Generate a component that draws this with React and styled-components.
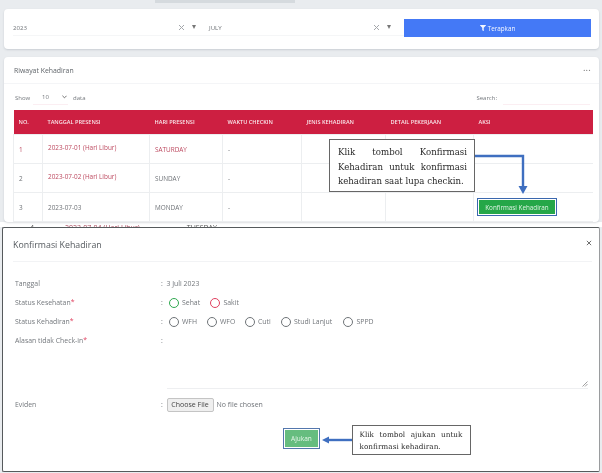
import React from 'react'
import styled, { createGlobalStyle } from 'styled-components'
import { FaFilter } from 'react-icons/fa'

const GlobalStyle = createGlobalStyle`
  html, body { margin: 0; padding: 0; background: #fff; }
  body { font-family: "Open Sans", "Liberation Sans", sans-serif; color: #6c7178; }
  * { box-sizing: border-box; }
`

const Page = styled.div`
  width: 602px;
  height: 473px;
  overflow: hidden;
  background: #e9ecef;
  display: flex;
  flex-direction: column;
  filter: blur(0.25px);
`
const TopStrip = styled.div`
  height: 3px;
  margin-left: 155px;
  width: 140px;
  background: #d5dade;
  flex: none;
`
const Card = styled.section`
  position: relative;
  margin: 0 3px 0 4px;
  background: #fff;
  border-radius: 4px;
  box-shadow: 0 1px 2px rgba(60, 70, 90, 0.18);
`
const FilterCard = styled(Card)`
  margin-top: 6px;
  height: 40px;
  padding: 10px 8px 0 9px;
  display: flex;
`
const Select = styled.div`
  width: ${p => p.$w}px;
  height: 17px;
  display: flex;
  align-items: center;
  font-size: 6.1px;
  color: #6f7378;
  border-bottom: 1px solid #f5f6f7;
  span:first-child { flex: 1; }
`
const Clear = styled.svg`
  width: 7px;
  height: 7px;
  margin-right: 7px;
  stroke: #a4a7ab;
  stroke-width: 1;
`
const Caret = styled.i`
  width: 0;
  height: 0;
  border-left: 2.5px solid transparent;
  border-right: 2.5px solid transparent;
  border-top: 4px solid #777;
  margin-right: ${p => p.$mr}px;
`
const ApplyButton = styled.button`
  width: 187px;
  height: 18px;
  border: none;
  padding: 0;
  background: #4479f6;
  color: #f2f6ff;
  font: 6.3px "Open Sans", sans-serif;
  display: flex;
  align-items: center;
  justify-content: center;
  gap: 2px;
`
const HistoryCard = styled(Card)`
  margin-top: 8px;
  height: 165px;
`
const CardHead = styled.div`
  height: 27px;
  padding: 0 8px 0 10px;
  border-bottom: 1px solid #f4f5f7;
  display: flex;
  align-items: center;
  justify-content: space-between;
  font-size: 6.9px;
  color: #5f6469;
`
const Dots = styled.span`
  font-size: 7px;
  font-weight: 700;
  letter-spacing: 0.6px;
  line-height: 1;
  margin-top: -3px;
  color: #777;
`
const Controls = styled.div`
  height: 26px;
  padding: 1px 9px 0 11px;
  display: flex;
  align-items: center;
  font-size: 6px;
  color: #74787d;
`
const Show = styled.span`
  width: 18px;
`
const PageSelect = styled.span`
  width: 35px;
  height: 15px;
  margin-right: 5px;
  padding-left: 9px;
  border-bottom: 1px solid #fbeef2;
  display: flex;
  align-items: center;
  justify-content: space-between;
`
const Chevron = styled.svg`
  width: 5px;
  height: 4px;
  margin-right: 1px;
  stroke: #666;
  fill: none;
  stroke-width: 1.1;
`
const SearchLabel = styled.span`
  margin-left: auto;
  margin-right: 6px;
`
const SearchInput = styled.span`
  width: 87px;
  height: 15px;
  border-bottom: 1px solid #fbeef2;
`
const Table = styled.table`
  width: 579px;
  margin-left: 9px;
  border-collapse: collapse;
  table-layout: fixed;
`
const HeadRow = styled.tr`
  height: 24px;
  background: #cd1f41;
`
const Th = styled.th`
  padding: 0 0 0 5px;
  font-size: 5.6px;
  font-weight: 600;
  text-align: left;
  color: #f8e4e8;
`
const Td = styled.td`
  height: 29px;
  padding: 1px 0 ${p => (p.$lift ? 4 : 0)}px 5px;
  font-size: 6.4px;
  color: ${p => (p.$red ? '#bd4a60' : '#6f7378')};
  border: 1px solid #eceef0;
  &:last-child { border-right: none; }
`
const SliverRow = styled.div`
  height: 5px;
  flex: none;
  overflow: hidden;
  display: flex;
  background: #fff;
  padding-left: 30px;
  font-size: 7px;
  line-height: 9px;
  color: #555;
  span { margin-top: 1px; white-space: nowrap; }
  span:nth-child(2) { margin-left: 31px; color: #a8465a; }
  span:nth-child(3) { margin-left: 47px; }
`
const Modal = styled.section`
  position: relative;
  flex: none;
  margin: 0 2px 0 2px;
  height: 244.5px;
  background: #fff;
  border: 1.5px solid #565a5c;
  border-bottom-width: 1px;
  border-right-color: #9a9c9e;
  border-radius: 2px;
`
const ModalHead = styled.div`
  height: 34px;
  margin: 0 7px 0 10px;
  border-bottom: 1px solid #f2f3f5;
  display: flex;
  align-items: center;
  justify-content: space-between;
  font-size: 8.8px;
  color: #555a5f;
`
const Close = styled.svg`
  width: 6px;
  height: 6px;
  margin: 0 0 3px;
  stroke: #666;
  stroke-width: 1.1;
`
const Form = styled.div`
  padding: 12px 0 0 12px;
`
const FieldRow = styled.div`
  height: ${p => p.$h || 19}px;
  display: grid;
  grid-template-columns: 146px 5.5px 1fr;
  align-items: ${p => (p.$top ? 'start' : 'center')};
  font-size: 6.9px;
  line-height: 19px;
  color: #73777c;
`
const Required = styled.b`
  color: #e0405f;
  font-weight: 400;
`
const Options = styled.div`
  display: flex;
  align-items: center;
  padding-left: 2px;
`
const Radio = styled.label`
  width: ${p => p.$w}px;
  display: flex;
  align-items: center;
  gap: 3.5px;
  &::before {
    content: "";
    width: 8px;
    height: 8px;
    border-radius: 50%;
    border: 1px solid ${p => p.$color || '#6f7478'};
  }
`
const TextArea = styled.div`
  position: relative;
  width: 421px;
  height: 58px;
  border-bottom: 1px solid #eeeff1;
`
const Grip = styled.svg`
  position: absolute;
  right: 0;
  bottom: 1px;
  width: 6px;
  height: 6px;
  stroke: #888;
  stroke-width: 0.8;
`
const FileRow = styled.div`
  display: flex;
  align-items: center;
  gap: 3px;
  font-size: 7px;
  color: #6f7378;
`
const FileButton = styled.span`
  width: 47px;
  height: 14px;
  background: #efefef;
  border: 1px solid #c4c4c4;
  border-radius: 2px;
  color: #444;
  font-size: 7px;
  line-height: 12px;
  text-align: center;
`
const Submit = styled.button`
  position: absolute;
  left: 280px;
  top: 200px;
  width: 37px;
  height: 21px;
  padding: 0;
  background: #66bd7f;
  border: 2px solid #fff;
  outline: 1px solid #5477ad;
  outline-offset: -1px;
  color: #e6f6ea;
  font: 6.5px "Open Sans", sans-serif;
`
const Callout = styled.div`
  position: absolute;
  left: ${p => p.$x}px;
  top: ${p => p.$y}px;
  width: ${p => p.$w}px;
  height: ${p => p.$h}px;
  padding: ${p => p.$pad};
  background: #fff;
  border: 1px solid #666;
  font-family: "DejaVu Serif", serif;
  font-size: ${p => p.$size}px;
  line-height: ${p => p.$lh}px;
  color: #2a2a2a;
  text-align: justify;
`
const Arrow = styled.svg`
  position: absolute;
  left: ${p => p.$x}px;
  top: ${p => p.$y}px;
  fill: none;
  overflow: visible;
`
const ConfirmButton = styled.button`
  position: absolute;
  left: 473px;
  top: 141px;
  width: 80px;
  height: 18px;
  padding: 0;
  background: #25a748;
  border: 2px solid #fff;
  outline: 1px solid #3b68ae;
  outline-offset: -1px;
  color: #dff3e4;
  font: 6.3px "Open Sans", sans-serif;
`

const columns = [
  ['NO.', 29], ['TANGGAL PRESENSI', 107], ['HARI PRESENSI', 73], ['WAKTU CHECKIN', 79],
  ['JENIS KEHADIRAN', 84], ['DETAIL PEKERJAAN', 88], ['AKSI', 119],
]
const rows = [
  { no: 1, date: '2023-07-01 (Hari Libur)', day: 'SATURDAY', off: true, allRed: true },
  { no: 2, date: '2023-07-02 (Hari Libur)', day: 'SUNDAY', off: true },
  { no: 3, date: '2023-07-03', day: 'MONDAY' },
]

const X = () => <path d="M1 1 L6 6 M6 1 L1 6" />

const App = () => (
  <Page>
    <GlobalStyle />
    <TopStrip />
    <FilterCard>
      <Select $w={196}>
        <span>2023</span>
        <Clear viewBox="0 0 7 7"><X /></Clear>
        <Caret $mr={13} />
      </Select>
      <Select $w={195}>
        <span>JULY</span>
        <Clear viewBox="0 0 7 7"><X /></Clear>
        <Caret $mr={13} />
      </Select>
      <ApplyButton><FaFilter size={6} /> Terapkan</ApplyButton>
    </FilterCard>
    <HistoryCard>
      <CardHead>
        Riwayat Kehadiran
        <Dots>...</Dots>
      </CardHead>
      <Controls>
        <Show>Show</Show>
        <PageSelect>
          10
          <Chevron viewBox="0 0 6 4"><path d="M0.5 0.5 L3 3 L5.5 0.5" /></Chevron>
        </PageSelect>
        data
        <SearchLabel>Search:</SearchLabel>
        <SearchInput />
      </Controls>
      <Table>
        <colgroup>
          {columns.map(([label, w]) => <col key={label} width={w} />)}
        </colgroup>
        <thead>
          <HeadRow>
            {columns.map(([label]) => <Th key={label}>{label}</Th>)}
          </HeadRow>
        </thead>
        <tbody>
          {rows.map(r => (
            <tr key={r.no}>
              <Td $red={r.allRed}>{r.no}</Td>
              <Td $red={r.off} $lift={r.off}>{r.date}</Td>
              <Td $red={r.allRed}>{r.day}</Td>
              <Td>-</Td>
              <Td />
              <Td />
              <Td />
            </tr>
          ))}
        </tbody>
      </Table>
      <Arrow $x={470} $y={99} width="50" height="42">
        <path d="M0 0 H49 V31" stroke="#3f6fc0" strokeWidth="2.4" />
        <path d="M44.5 30 H53.5 L49 38 Z" fill="#3f6fc0" />
      </Arrow>
      <Callout $x={325} $y={82} $w={146} $h={53} $pad="5px 7px 5px 8px" $size={8.6} $lh={14.5}>
        Klik tombol Konfirmasi Kehadiran untuk konfirmasi kehadiran saat lupa checkin.
      </Callout>
      <ConfirmButton>Konfirmasi Kehadiran</ConfirmButton>
    </HistoryCard>
    <SliverRow>
      <span>4</span>
      <span>2023-07-04 (Hari Libur)</span>
      <span>TUESDAY</span>
    </SliverRow>
    <Modal>
      <ModalHead>
        Konfirmasi Kehadiran
        <Close viewBox="0 0 7 7"><X /></Close>
      </ModalHead>
      <Form>
        <FieldRow><span>Tanggal</span><span>:</span><span>3 Juli 2023</span></FieldRow>
        <FieldRow>
          <span>Status Kesehatan<Required>*</Required></span>
          <span>:</span>
          <Options>
            <Radio $w={41.5} $color="#2fa84f">Sehat</Radio>
            <Radio $w={40} $color="#e0405f">Sakit</Radio>
          </Options>
        </FieldRow>
        <FieldRow>
          <span>Status Kehadiran<Required>*</Required></span>
          <span>:</span>
          <Options>
            <Radio $w={38}>WFH</Radio>
            <Radio $w={38}>WFO</Radio>
            <Radio $w={36}>Cuti</Radio>
            <Radio $w={62.5}>Studi Lanjut</Radio>
            <Radio $w={40}>SPPD</Radio>
          </Options>
        </FieldRow>
        <FieldRow $h={64} $top>
          <span>Alasan tidak Check-in<Required>*</Required></span>
          <span>:</span>
          <TextArea>
            <Grip viewBox="0 0 6 6"><path d="M0.5 5.5 L5.5 0.5 M3 5.5 L5.5 3" /></Grip>
          </TextArea>
        </FieldRow>
        <FieldRow>
          <span>Eviden</span>
          <span>:</span>
          <FileRow><FileButton>Choose File</FileButton>No file chosen</FileRow>
        </FieldRow>
      </Form>
      <Submit>Ajukan</Submit>
      <Arrow $x={318.5} $y={212} width="30" height="6">
        <path d="M6 0 H30" stroke="#3f6fc0" strokeWidth="2.4" />
        <path d="M0 0 L7 -3.5 V3.5 Z" fill="#3f6fc0" />
      </Arrow>
      <Callout $x={348.5} $y={196.5} $w={119} $h={30} $pad="3px 7px" $size={7.3} $lh={12}>
        Klik tombol ajukan untuk konfirmasi kehadiran.
      </Callout>
    </Modal>
  </Page>
)

export default App
